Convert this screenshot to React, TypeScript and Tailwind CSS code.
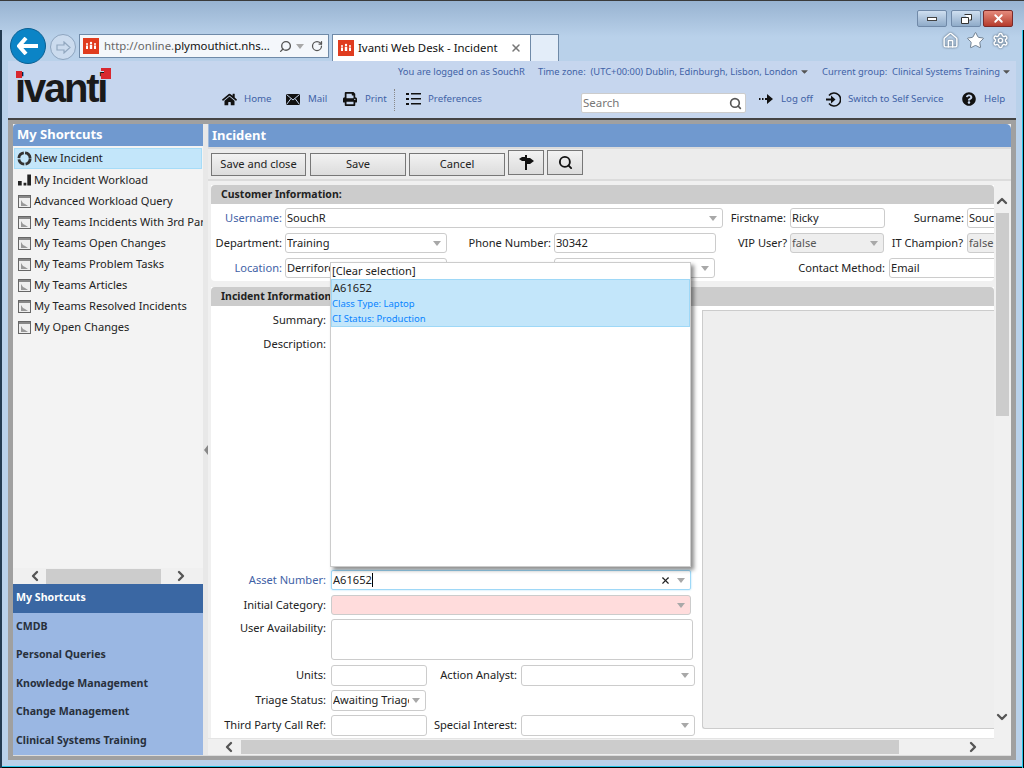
import { ReactNode } from "react";
import { ChevronDown, ChevronLeft, ChevronRight, ChevronUp, Search, RotateCw, Home as HomeLine, Star, Settings, X } from "lucide-react";
import { FaHome, FaPrint, FaQuestionCircle, FaCaretDown } from "react-icons/fa";

const UI = "font-['Noto_Sans',sans-serif]";

function Favicon() {
  return (
    <svg width="16" height="16" viewBox="0 0 16 16" className="shrink-0">
      <rect width="16" height="16" fill="#e03c1f" />
      <circle cx="4" cy="6" r="1" fill="#fff" />
      <circle cx="8" cy="5" r="1.2" fill="#fff" />
      <circle cx="12" cy="6" r="1" fill="#fff" />
      <path d="M3 7.500h2v3.500H3zM6.800 6.800h2.400V11H6.800zM11 7.500h2v3.500h-2z" fill="#fff" />
    </svg>
  );
}

function Caret({ className = "" }: { className?: string }) {
  return (
    <svg width="8" height="5" viewBox="0 0 8 5" className={"shrink-0 " + className}>
      <path d="M0 0h8L4 5z" fill="#a8a8a8" />
    </svg>
  );
}

function MailIcon() {
  return (
    <svg width="14" height="11" viewBox="0 0 14 11">
      <rect width="14" height="11" fill="#111" />
      <path d="M0.5 0.5L7 6L13.5 0.5M0.5 10.5L5 4.5M13.5 10.5L9 4.5" stroke="#c6d6ee" strokeWidth="1" fill="none" />
    </svg>
  );
}

function ListIcon() {
  return (
    <svg width="15" height="12" viewBox="0 0 15 12">
      <path d="M0 0h3v2H0zM0 5h3v2H0zM0 10h3v2H0zM5 0h10v1.500H5zM5 5h10v1.500H5zM5 10h10v1.500H5z" fill="#111" />
    </svg>
  );
}

function LogOffIcon() {
  return (
    <svg width="14" height="10" viewBox="0 0 14 10">
      <path d="M0 4h1.500v2H0zM3 4h1.500v2H3zM6 4h2V0l6 5-6 5V6H6z" fill="#111" />
    </svg>
  );
}

function SwitchIcon() {
  return (
    <svg width="15" height="15" viewBox="0 0 15 15">
      <path d="M3 3.500A6.500 6.500 0 1 1 3 11.500" fill="none" stroke="#111" strokeWidth="1.600" />
      <path d="M0 6.500h5V3.500l4.500 4-4.500 4v-3H0z" fill="#111" />
    </svg>
  );
}

function RingIcon() {
  return (
    <svg width="15" height="15" viewBox="0 0 16 16" className="mr-[2px] shrink-0">
      <circle cx="8" cy="8" r="6" fill="none" stroke="#333" strokeWidth="3" strokeDasharray="8 1.400" />
    </svg>
  );
}

function BarsIcon() {
  return (
    <svg width="13" height="12" viewBox="0 0 14 12">
      <path d="M0 7h4v5H0zM6 9h3v3H6zM10 0h4v12h-4z" fill="#222" />
    </svg>
  );
}

function ReportIcon() {
  return (
    <svg width="13" height="13" viewBox="0 0 13 13">
      <rect x="0.5" y="0.5" width="12" height="12" fill="#eee" stroke="#666" />
      <rect x="1" y="1" width="11" height="2" fill="#888" />
      <path d="M3 11V5l2 3 2 1 3 2z" fill="#999" />
    </svg>
  );
}

function SignIcon() {
  return (
    <svg width="15" height="15" viewBox="0 0 15 15">
      <path d="M6 0h2v3h3l4 3-4 3H8v6H6V6H3L0 4l3-2h3z" fill="#111" />
    </svg>
  );
}

function NavLink({ icon, text, className = "" }: { icon: ReactNode; text: string; className?: string }) {
  return (
    <div className={"flex items-center text-[#3f62a6] " + className}>
      <span className="w-[22px] flex items-center shrink-0">{icon}</span>
      <span className="whitespace-nowrap">{text}</span>
    </div>
  );
}

function Label({ children, className = "", link = false }: { children: ReactNode; className?: string; link?: boolean }) {
  return (
    <span className={"shrink-0 text-right whitespace-nowrap " + (link ? "text-[#3f62a6] " : "text-[#222] ") + className}>
      {children}
    </span>
  );
}

function Input({ value = "", className = "", caret = false }: { value?: string; className?: string; caret?: boolean }) {
  return (
    <div className={"shrink-0 h-[20px] flex items-center pl-[1px] pr-[5px] border border-[#ccc] rounded-[3px] overflow-hidden whitespace-nowrap text-[#222] " + className}>
      <span className="flex-1 overflow-hidden">{value}</span>
      {caret && <Caret className="ml-[3px]" />}
    </div>
  );
}

const shortcuts = [
  "Advanced Workload Query",
  "My Teams Incidents With 3rd Party",
  "My Teams Open Changes",
  "My Teams Problem Tasks",
  "My Teams Articles",
  "My Teams Resolved Incidents",
  "My Open Changes",
];

const navItems = ["CMDB", "Personal Queries", "Knowledge Management", "Change Management", "Clinical Systems Training"];

function BrowserChrome() {
  return (
    <div className="h-[61px] shrink-0 bg-gradient-to-b from-[#98b3d1] to-[#b9d1ea] to-[60%] border-t border-[#3a3a3a] relative">
      <div className="h-[26px] flex justify-end items-end pr-[11px]">
        <div className="w-[30px] h-[17px] rounded-[2px] border border-[#7089a8] bg-gradient-to-b from-[#cfdff0] to-[#8fabc9] flex items-center justify-center">
          <div className="w-[10px] h-[4px] bg-white border border-[#444]" />
        </div>
        <div className="ml-[4px] w-[30px] h-[17px] rounded-[2px] border border-[#7089a8] bg-gradient-to-b from-[#cfdff0] to-[#8fabc9] flex items-center justify-center">
          <svg width="11" height="10" viewBox="0 0 11 10"><path d="M3.500.5h7v5.500h-2M.5 3.500h7v6h-7z" fill="#fff" stroke="#333" /></svg>
        </div>
        <div className="ml-[2px] w-[30px] h-[17px] rounded-[2px] border border-[#7a2a2a] bg-gradient-to-b from-[#e58a7c] to-[#b53a2c] flex items-center justify-center">
          <X size={13} strokeWidth={3.5} className="text-white" />
        </div>
      </div>
      <div className="flex items-start mt-[7px] pl-[79px]">
        <div className="w-[250px] h-[24px] bg-[#f4f7fb] border border-[#6f8aa8] flex items-center pl-[3px] pr-[5px] text-[11.4px] whitespace-nowrap">
          <Favicon />
          <span className="ml-[5px] text-[#666]">http://online.</span>
          <span className="text-[#111]">plymouthict.nhs...</span>
          <Search size={13} className="ml-auto text-[#555] -scale-x-100" strokeWidth={2.5} />
          <Caret className="ml-[4px] mr-[7px]" />
          <RotateCw size={12} strokeWidth={2.5} className="text-[#555]" />
        </div>
        <div className="ml-[3px] w-[199px] h-[27px] bg-white border border-b-0 border-[#6f8aa8] flex items-center pl-[5px] text-[11.4px] text-[#111] whitespace-nowrap">
          <Favicon />
          <span className="ml-[4px]">Ivanti Web Desk - Incident</span>
          <X size={12} strokeWidth={3} className="ml-auto mr-[8px] text-[#777]" />
        </div>
        <div className="w-[28px] h-[27px] bg-[#e3edf9] border border-l-0 border-b-0 border-[#6f8aa8]" />
        <div className="ml-auto flex items-center gap-[7px] pr-[15px] -mt-[3px] text-white">
          <HomeLine size={17} strokeWidth={2} className="text-[#fff] drop-shadow-[0_0_1px_#456]" />
          <Star size={19} fill="#fff" strokeWidth={1} className="text-[#567]" />
          <Settings size={17} strokeWidth={2} className="text-[#fff] drop-shadow-[0_0_1px_#456]" />
        </div>
      </div>

      {/* back / forward sit over the edge of the header */}
      <div className="absolute left-[10px] top-[27px] w-[36px] h-[36px] rounded-full bg-[#0b84c6] border border-[#0a5f92] flex items-center justify-center z-10">
        <svg width="22" height="18" viewBox="0 0 22 18"><path d="M9 1L2 9l7 8M2.500 9H21" fill="none" stroke="#fff" strokeWidth="4" /></svg>
      </div>
      <div className="absolute left-[50px] top-[33px] w-[26px] h-[26px] rounded-full bg-[#cbdbee] border border-[#8ea5bf] flex items-center justify-center">
        <svg width="15" height="13" viewBox="0 0 15 13"><path d="M8 1l6 5.500-6 5.500V9H1V4h7z" fill="none" stroke="#92a8c0" strokeWidth="1.200" /></svg>
      </div>
    </div>
  );
}

function AppHeader() {
  return (
    <div className="h-[59px] shrink-0 bg-[#c6d6ee] border-b-2 border-[#444] flex text-[9.7px]">
      <div className="w-[214px] shrink-0 pl-[7px] relative">
        <span className="block font-['Liberation_Sans',sans-serif] font-bold text-[40px] leading-[46px] tracking-[-2.2px] text-[#1a1a1a] mt-[4px]">ivanti</span>
        <div className="absolute left-[8px] top-[10px] w-[6px] h-[7px] bg-[#d8282f]" />
        <svg width="10" height="11" viewBox="0 0 10 11" className="absolute left-[93px] top-[7px]">
          <path d="M0 0h10v11H3V3H0z" fill="#d8282f" />
          <rect x="0" y="5" width="3" height="6" fill="#d8282f" />
        </svg>
      </div>
      <div className="flex-1 flex flex-col">
        <div className="flex items-center h-[22px] pl-[176px] text-[9.35px] text-[#3f62a6]">
          <span className="w-[140px] whitespace-nowrap">You are logged on as SouchR</span>
          <span className="w-[284px] whitespace-nowrap flex items-center">
            Time zone:&nbsp; (UTC+00:00) Dublin, Edinburgh, Lisbon, London
            <FaCaretDown className="text-[#555] ml-[1px]" size={11} />
          </span>
          <span className="whitespace-nowrap flex items-center">
            Current group:&nbsp; Clinical Systems Training
            <FaCaretDown className="text-[#555] ml-[1px]" size={11} />
          </span>
        </div>
        <div className="flex items-center h-[31px] mt-[1px]">
          <NavLink icon={<FaHome size={15} className="text-[#111]" />} text="Home" className="w-[64px]" />
          <NavLink icon={<MailIcon />} text="Mail" className="w-[57px]" />
          <NavLink icon={<FaPrint size={14} className="text-[#111]" />} text="Print" className="w-[51px]" />
          <div className="h-[22px] border-l border-dotted border-[#888] mr-[11px]" />
          <NavLink icon={<ListIcon />} text="Preferences" className="w-[175px]" />
          <div className="w-[165px] h-[20px] mt-[7px] bg-white border border-[#ccc] rounded-[2px] flex items-center pl-[1px] pr-[3px] text-[11.5px] text-[#777] shrink-0">
            <span>Search</span>
            <Search size={13} strokeWidth={3} className="ml-auto text-[#555]" />
          </div>
          <NavLink icon={<LogOffIcon />} text="Log off" className="ml-[13px] w-[67px]" />
          <NavLink icon={<SwitchIcon />} text="Switch to Self Service" className="w-[136px]" />
          <NavLink icon={<FaQuestionCircle size={14} className="text-[#111]" />} text="Help" />
        </div>
      </div>
    </div>
  );
}

function Sidebar() {
  return (
    <div className="w-[190px] shrink-0 flex flex-col bg-[#f3f3f3] text-[11.1px]">
      <div className="h-[22px] shrink-0 bg-[#7099cf] rounded-tl-[4px] flex items-center px-[4px] text-white font-bold text-[13px]">My Shortcuts</div>
      <div className="flex-1 overflow-hidden text-[#222] pt-[2px]">
        <div className="h-[21px] mx-[1px] bg-[#c3e6fa] border border-[#a6dcf8] flex items-center pl-[2px] whitespace-nowrap">
          <RingIcon />
          <span>New Incident</span>
        </div>
        <div className="h-[22px] flex items-center pl-[5px] whitespace-nowrap">
          <span className="w-[16px] shrink-0"><BarsIcon /></span>
          <span>My Incident Workload</span>
        </div>
        {shortcuts.map((s) => (
          <div key={s} className="h-[21px] flex items-center pl-[5px] whitespace-nowrap">
            <span className="w-[16px] shrink-0 flex"><ReportIcon /></span>
            <span>{s}</span>
          </div>
        ))}
      </div>
      <div className="h-[16px] shrink-0 bg-[#f0f0f0] flex items-center pl-[14px] pr-[14px]">
        <ChevronLeft size={16} strokeWidth={3.5} className="text-[#555]" />
        <div className="ml-[3px] w-[115px] h-[15px] bg-[#cccccc]" />
        <ChevronRight size={16} strokeWidth={3.5} className="text-[#555] ml-auto" />
      </div>
      <div className="h-[171px] shrink-0 flex flex-col font-bold text-[10.6px] bg-[#9ab7e3] text-[#28303c]">
        <div className="flex-1 bg-[#3a67a3] flex items-center pl-[3px] text-white">My Shortcuts</div>
        {navItems.map((n) => (
          <div key={n} className="flex-1 flex items-center pl-[3px]">{n}</div>
        ))}
      </div>
    </div>
  );
}

function Toolbar() {
  const btn = "h-[23px] border border-[#777] bg-gradient-to-b from-[#f2f2f2] to-[#dcdcdc] flex items-center justify-center text-[#222]";
  return (
    <div className="h-[34px] shrink-0 bg-[#ececec] border-t-2 border-b-2 border-[#dcdcdc] flex items-start pl-[3px] pt-[1px]">
      <div className={btn + " w-[95px] mt-[3px]"}>Save and close</div>
      <div className={btn + " w-[96px] ml-[4px] mt-[3px]"}>Save</div>
      <div className={btn + " w-[96px] ml-[3px] mt-[3px]"}>Cancel</div>
      <div className={btn + " w-[36px] h-[25px] ml-[3px]"}><SignIcon /></div>
      <div className={btn + " w-[36px] h-[25px] ml-[3px]"}><Search size={15} strokeWidth={3} className="text-[#111]" /></div>
    </div>
  );
}

function SectionHeader({ title }: { title: string }) {
  return (
    <div className="h-[19px] bg-[#cccccc] rounded-t-[4px] flex items-center pl-[10px] font-bold text-[10.5px] text-[#222] shrink-0">{title}</div>
  );
}

function CustomerInfo() {
  return (
    <div className="bg-white rounded-b-[4px] overflow-hidden shrink-0 h-[96px]">
      <SectionHeader title="Customer Information:" />
      <div className="flex items-center mt-[4px]">
        <Label link className="w-[71px]">Username:</Label>
        <Input value="SouchR" caret className="w-[438px] ml-[3px]" />
        <Label className="w-[63px]">Firstname:</Label>
        <Input value="Ricky" className="w-[95px] ml-[4px]" />
        <Label className="w-[79px]">Surname:</Label>
        <Input value="SouchR" className="w-[60px] ml-[3px]" />
      </div>
      <div className="flex items-center mt-[5px]">
        <Label className="w-[71px]">Department:</Label>
        <Input value="Training" caret className="w-[162px] ml-[3px]" />
        <Label className="w-[104px]">Phone Number:</Label>
        <Input value="30342" className="w-[162px] ml-[3px]" />
        <Label className="w-[71px]">VIP User?</Label>
        <Input value="false" caret className="w-[94px] ml-[3px] bg-[#eeeeee] text-[#555]" />
        <Label className="w-[79px]">IT Champion?</Label>
        <Input value="false" caret className="w-[60px] ml-[4px] bg-[#eeeeee] text-[#555]" />
      </div>
      <div className="flex items-center mt-[5px]">
        <Label link className="w-[71px]">Location:</Label>
        <Input value="Derriford" caret className="w-[162px] ml-[3px]" />
        <Input caret className="w-[161px] ml-[107px]" />
        <Label className="w-[170px]">Contact Method:</Label>
        <Input value="Email" className="w-[120px] ml-[4px]" />
      </div>
    </div>
  );
}

function IncidentInfo() {
  return (
    <div className="flex-1 bg-white mt-[6px] flex flex-col overflow-hidden">
      <SectionHeader title="Incident Information" />
      <div className="flex-1 flex">
        <div className="w-[491px] shrink-0 pt-[4px]">
          <div className="flex items-center">
            <Label className="w-[115px]">Summary:</Label>
            <Input className="w-[360px] ml-[5px]" />
          </div>
          <div className="flex mt-[4px] h-[231px]">
            <Label className="w-[115px] pt-[2px]">Description:</Label>
          </div>
          <div className="flex items-center mt-[5px]">
            <Label link className="w-[115px]">Asset Number:</Label>
            <div className="w-[360px] ml-[5px] h-[20px] border border-[#9ed8f7] rounded-[2px] shadow-[0_0_2px_#9ed8f7] flex items-center pl-[1px] pr-[5px] text-[#222]">
              <span>A61652</span>
              <span className="w-[1px] h-[14px] bg-black" />
              <X size={11} strokeWidth={2.5} className="ml-auto mr-[6px] text-[#222]" />
              <Caret />
            </div>
          </div>
          <div className="flex items-center mt-[5px]">
            <Label className="w-[115px]">Initial Category:</Label>
            <Input caret className="w-[360px] ml-[5px] bg-[#ffdcdc]" />
          </div>
          <div className="flex mt-[4px]">
            <Label className="w-[115px] pt-[1px]">User Availability:</Label>
            <div className="w-[362px] ml-[5px] h-[41px] border border-[#ccc] rounded-[3px]" />
          </div>
          <div className="flex items-center mt-[5px]">
            <Label className="w-[115px]">Units:</Label>
            <Input className="w-[96px] ml-[5px] h-[21px]" />
            <Label className="w-[90px]">Action Analyst:</Label>
            <Input caret className="w-[174px] ml-[4px] h-[21px]" />
          </div>
          <div className="flex items-center mt-[4px]">
            <Label className="w-[115px]">Triage Status:</Label>
            <Input value="Awaiting Triage" caret className="w-[95px] ml-[5px] h-[21px]" />
          </div>
          <div className="flex items-center mt-[4px]">
            <Label className="w-[115px]">Third Party Call Ref:</Label>
            <Input className="w-[96px] ml-[5px] h-[21px]" />
            <Label className="w-[90px]">Special Interest:</Label>
            <Input caret className="w-[174px] ml-[4px] h-[21px]" />
          </div>
        </div>
        <div className="flex-1 h-[419px] mt-[4px] bg-[#eeeeee] border-l border-t border-b border-[#cccccc] rounded-bl-[3px]" />
      </div>
    </div>
  );
}

function AssetDropdown() {
  return (
    <div className="absolute left-[122px] top-[81px] w-[361px] h-[305px] bg-white border border-[#ccc] shadow-[3px_3px_4px_rgba(0,0,0,0.45)] text-[#222] z-10">
      <div className="h-[16px] flex items-center pl-[1px]">[Clear selection]</div>
      <div className="h-[48px] bg-[#c3e6fa] border border-[#9ed8f7] flex flex-col">
        <span className="h-[16px] pl-[1px] flex items-center">A61652</span>
        <span className="h-[16px] mt-[1px] flex items-center text-[9.5px] text-[#0a84ff]">Class Type: Laptop</span>
        <span className="h-[16px] flex items-center text-[9.5px] text-[#0a84ff]">CI Status: Production</span>
      </div>
    </div>
  );
}

function MainPanel() {
  return (
    <div className="flex-1 min-w-0 flex flex-col bg-[#f0f0f0] text-[11.1px]">
      <div className="h-[23px] shrink-0 bg-[#7099cf] rounded-tr-[5px] border-l border-[#9fb9dc] flex items-center pl-[3px] text-white font-bold text-[13px]">Incident</div>
      <Toolbar />
      <div className="flex-1 min-h-0 flex">
        <div className="w-[786px] shrink-0 flex flex-col">
          <div className="flex-1 min-h-0 pl-[3px] pt-[4px] relative flex flex-col">
            <CustomerInfo />
            <IncidentInfo />
            <AssetDropdown />
          </div>
          <div className="h-[17px] shrink-0 flex items-center pl-[13px] pr-[13px] bg-[#f0f0f0] border-t border-[#e4e4e4]">
            <ChevronLeft size={16} strokeWidth={3.5} className="text-[#555]" />
            <div className="ml-[4px] w-[658px] h-[14px] bg-[#cccccc]" />
            <ChevronRight size={16} strokeWidth={3.5} className="text-[#555] ml-auto" />
          </div>
        </div>
        <div className="relative z-20 w-[16px] shrink-0 flex flex-col items-center pt-[12px] pb-[30px] bg-[#f0f0f0]">
          <ChevronUp size={16} strokeWidth={3.5} className="text-[#555] shrink-0" />
          <div className="w-[13px] h-[203px] bg-[#cccccc] mt-[4px] shrink-0" />
          <ChevronDown size={16} strokeWidth={3.5} className="text-[#555] mt-auto shrink-0" />
        </div>
      </div>
    </div>
  );
}

export default function App() {
  return (
    <div className={"w-[1024px] h-[768px] overflow-hidden flex flex-col bg-[#b9d1ea] relative " + UI}>
      <BrowserChrome />
      <div className="flex-1 min-h-0 mx-[8px] mb-[8px] flex flex-col">
        <AppHeader />
        <div className="flex-1 min-h-0 bg-[#a0a0a0] px-[5px] pt-[4px] pb-[4px]">
          <div className="h-full flex bg-[#e8e8e8] border-b border-[#dcdcdc]">
            <Sidebar />
            <div className="w-[5px] shrink-0 bg-[#e8e8e8] flex items-center justify-center pt-[20px]">
              <div className="w-0 h-0 border-y-[5px] border-y-transparent border-r-[4px] border-r-[#888]" />
            </div>
            <MainPanel />
          </div>
        </div>
      </div>
      <div className="absolute inset-x-0 bottom-0 h-[2px] bg-[#22c3e6] border-b border-black" />
      <div className="absolute top-[30px] bottom-0 right-0 w-[2px] bg-[#22c3e6] border-r border-black" />
      <div className="absolute left-0 top-[30px] bottom-0 w-[2px] bg-[#223a50]" />
    </div>
  );
}
